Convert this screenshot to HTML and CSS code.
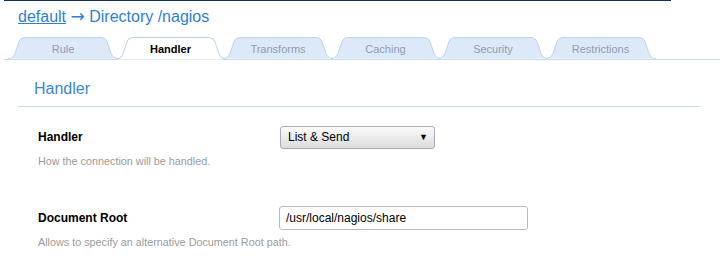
FILE: index.html
```html
<!DOCTYPE html>
<html lang="en">
<head>
  <meta charset="UTF-8">
  <title>Directory /nagios - Handler</title>
  <link rel="stylesheet" href="styles.css">
</head>
<body>
  <div class="top-rule"></div>
  <h1 class="page-title"><a href="#">default</a> <span class="arrow">&rarr;</span> Directory /nagios</h1>

  <ul class="tabs">
    <li class="tab"><svg class="tab-shape" viewBox="0 0 110 22" preserveAspectRatio="none"><path d="M0,21.5 C4,21.5 6,19 7.5,15 L11,4.5 C12,2 14,0.5 18,0.5 L92,0.5 C96,0.5 98,2 99,4.5 L102.5,15 C104,19 106,21.5 110,21.5"/></svg><span>Rule</span></li>
    <li class="tab active"><svg class="tab-shape" viewBox="0 0 110 22" preserveAspectRatio="none"><path d="M0,21.5 C4,21.5 6,19 7.5,15 L11,4.5 C12,2 14,0.5 18,0.5 L92,0.5 C96,0.5 98,2 99,4.5 L102.5,15 C104,19 106,21.5 110,21.5"/></svg><span>Handler</span></li>
    <li class="tab"><svg class="tab-shape" viewBox="0 0 110 22" preserveAspectRatio="none"><path d="M0,21.5 C4,21.5 6,19 7.5,15 L11,4.5 C12,2 14,0.5 18,0.5 L92,0.5 C96,0.5 98,2 99,4.5 L102.5,15 C104,19 106,21.5 110,21.5"/></svg><span>Transforms</span></li>
    <li class="tab"><svg class="tab-shape" viewBox="0 0 110 22" preserveAspectRatio="none"><path d="M0,21.5 C4,21.5 6,19 7.5,15 L11,4.5 C12,2 14,0.5 18,0.5 L92,0.5 C96,0.5 98,2 99,4.5 L102.5,15 C104,19 106,21.5 110,21.5"/></svg><span>Caching</span></li>
    <li class="tab"><svg class="tab-shape" viewBox="0 0 110 22" preserveAspectRatio="none"><path d="M0,21.5 C4,21.5 6,19 7.5,15 L11,4.5 C12,2 14,0.5 18,0.5 L92,0.5 C96,0.5 98,2 99,4.5 L102.5,15 C104,19 106,21.5 110,21.5"/></svg><span>Security</span></li>
    <li class="tab"><svg class="tab-shape" viewBox="0 0 110 22" preserveAspectRatio="none"><path d="M0,21.5 C4,21.5 6,19 7.5,15 L11,4.5 C12,2 14,0.5 18,0.5 L92,0.5 C96,0.5 98,2 99,4.5 L102.5,15 C104,19 106,21.5 110,21.5"/></svg><span>Restrictions</span></li>
  </ul>

  <div class="panel">
    <h2 class="section-title">Handler</h2>

    <div class="field">
      <div class="field-row">
        <label class="field-label">Handler</label>
        <span class="select-wrap">
          <select class="select">
            <option>List &amp; Send</option>
          </select>
        </span>
      </div>
      <p class="field-help">How the connection will be handled.</p>
    </div>

    <div class="field">
      <div class="field-row">
        <label class="field-label">Document Root</label>
        <input class="text-input" type="text" value="/usr/local/nagios/share">
      </div>
      <p class="field-help">Allows to specify an alternative Document Root path.</p>
    </div>
  </div>
</body>
</html>
```

FILE: styles.css
```css
/* Global */
body {
  margin: 0;
  font-family: "Liberation Sans", Arial, sans-serif;
  background: #fff;
  color: #000;
}
.top-rule {
  height: 1px;
  margin: 0 49px 0 4px;
  background: #0f3160;
}
/* Title */
.page-title {
  margin: 0;
  padding: 7px 0 0 18px;
  height: 29px;
  box-sizing: border-box;
  font-size: 16px;
  font-weight: normal;
  color: #2f7fd6;
}
.page-title a { color: #2f7fd6; }
.page-title .arrow { font-family: "DejaVu Sans", sans-serif; font-size: 17px; line-height: 1; }
/* Tabs */
.tabs {
  display: flex;
  list-style: none;
  margin: 7px 0 0 4px;
  padding: 0 0 0 4px;
  height: 22px;
  border-bottom: 1px solid #c7dbef;
}
.tab {
  position: relative;
  width: 110px;
  height: 22px;
  margin-right: -2.5px;
  display: flex;
  align-items: center;
  justify-content: center;
  font-size: 11px;
  color: #8c9db3;
}
.tab span { position: relative; padding-top: 2px; }
.tab-shape {
  position: absolute;
  top: 0; left: 0;
  width: 110px; height: 22px;
  overflow: visible;
}
.tab-shape path {
  fill: #dde9f8;
  stroke: #bcd3ec;
  stroke-width: 1;
}
.tab.active { z-index: 2; color: #000; font-weight: bold; }
.tab.active .tab-shape { height: 23px; }
.tab.active .tab-shape path { fill: #fff; }
/* Panel */
.panel { padding: 0 20px 0 18px; }
.section-title {
  margin: 0;
  padding: 20px 0 0 16px;
  height: 47px;
  box-sizing: border-box;
  font-size: 16px;
  font-weight: normal;
  color: #3a88d8;
  border-bottom: 1px solid #c7dbef;
}
.field { padding: 18px 0 0 20px; height: 99px; box-sizing: border-box; }
.field + .field { padding-top: 0; height: auto; }
.field-row {
  display: flex;
  align-items: center;
  height: 24px;
}
.field-label {
  width: 242px;
  font-size: 12px;
  font-weight: bold;
}
.field-help {
  margin: 6px 0 0;
  font-size: 10.8px;
  color: #9a9a9a;
}
/* Controls */
.select-wrap { position: relative; display: inline-block; }
.select-wrap::after {
  content: "\25BC";
  position: absolute;
  right: 7px; top: 6px;
  font-size: 9px;
  color: #000;
  pointer-events: none;
}
.select {
  -webkit-appearance: none;
  appearance: none;
  width: 155px;
  height: 23px;
  padding: 0 0 0 7px;
  font-family: "Liberation Sans", Arial, sans-serif;
  font-size: 12px;
  color: #000;
  border: 1px solid #a8adb5;
  border-radius: 3px;
  background: linear-gradient(#fbfbfb, #dcdcdc);
}
.text-input {
  width: 249px;
  height: 24px;
  box-sizing: border-box;
  padding: 0 6px;
  font-family: "Liberation Sans", Arial, sans-serif;
  font-size: 12px;
  color: #000;
  border: 1px solid #b4bcc8;
  border-radius: 3px;
  margin-left: -1px;
}
```
